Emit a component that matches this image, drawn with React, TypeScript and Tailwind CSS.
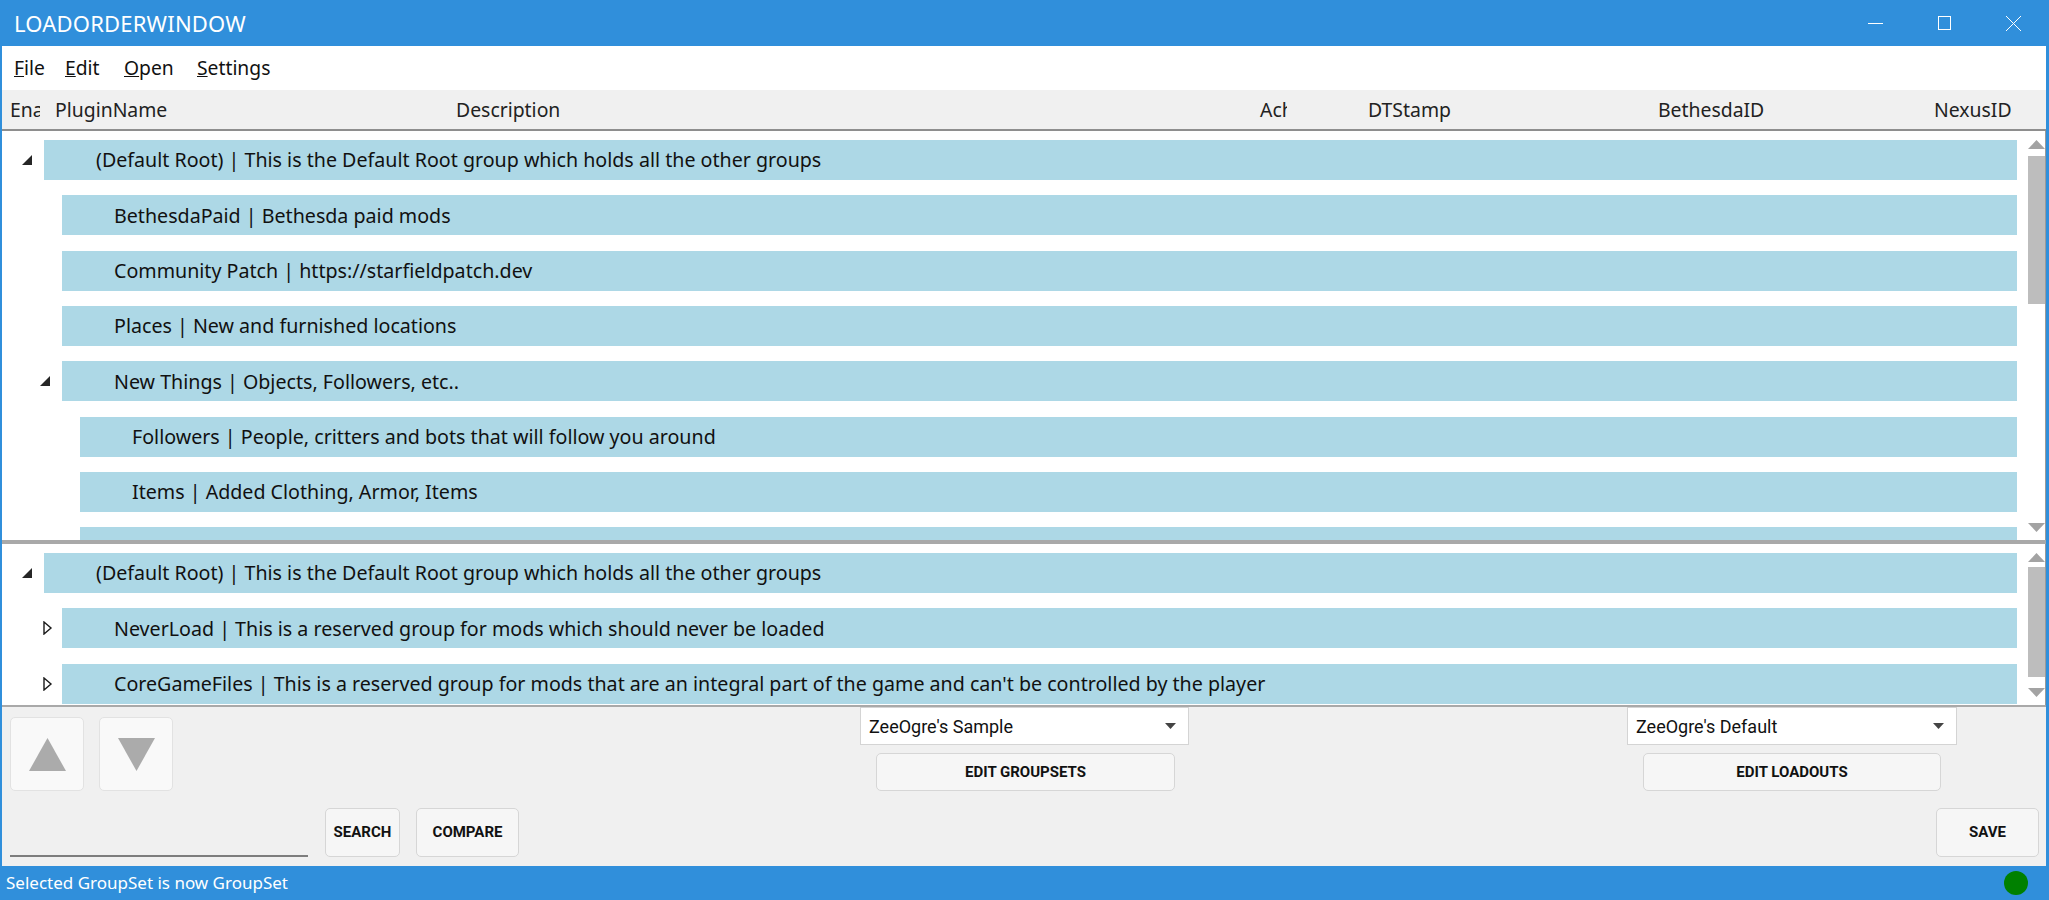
import React from 'react';

type Node = { lvl: number; exp?: 'open' | 'closed'; text: string };

const topTree: Node[] = [
    { lvl: 0, exp: 'open', text: '(Default Root) | This is the Default Root group which holds all the other groups' },
    { lvl: 1, text: 'BethesdaPaid | Bethesda paid mods' },
    { lvl: 1, text: 'Community Patch | https://starfieldpatch.dev' },
    { lvl: 1, text: 'Places | New and furnished locations' },
    { lvl: 1, exp: 'open', text: 'New Things | Objects, Followers, etc..' },
    { lvl: 2, text: 'Followers | People, critters and bots that will follow you around' },
    { lvl: 2, text: 'Items | Added Clothing, Armor, Items' },
    { lvl: 2, text: 'New Ships | Ships and ship parts' },
];

const bottomTree: Node[] = [
    { lvl: 0, exp: 'open', text: '(Default Root) | This is the Default Root group which holds all the other groups' },
    { lvl: 1, exp: 'closed', text: 'NeverLoad | This is a reserved group for mods which should never be loaded' },
    { lvl: 1, exp: 'closed', text: "CoreGameFiles | This is a reserved group for mods that are an integral part of the game and can't be controlled by the player" },
];

const indent = ['pl-[16px]', 'pl-[34px]', 'pl-[52px]'];

const Expander = ({ exp }: { exp?: 'open' | 'closed' }) => (
    <div className="w-[18px] h-[40px] flex items-center justify-center">
        {exp === 'open' && (
            <svg width="12" height="12" viewBox="0 0 12 12">
                <polygon points="11,1 11,11 1,11" fill="#262626" />
            </svg>
        )}
        {exp === 'closed' && (
            <svg width="12" height="14" viewBox="0 0 12 14" className="ml-[5px]">
                <polygon points="2,1 9,7 2,13" fill="#fff" stroke="#1a1a1a" strokeWidth="1.4" />
            </svg>
        )}
    </div>
);

const TreeRow = ({ node }: { node: Node }) => (
    <div className={`flex items-center h-[40px] mb-[15.33px] shrink-0 ${indent[node.lvl]}`}>
        <Expander exp={node.exp} />
        <div className="ml-[8px] flex-1 h-[40px] bg-[#add8e6] flex items-center pl-[52px] text-[19.65px] text-[#111] whitespace-nowrap overflow-hidden">
            {node.text}
        </div>
    </div>
);

const ScrollBar = ({ thumbTop, thumbH }: { thumbTop: number; thumbH: number }) => (
    <div className="w-[22px] h-full flex flex-col items-center pl-[5px]">
        <svg width="17" height="10" viewBox="0 0 17 10" className="mt-[9px] shrink-0">
            <polygon points="8.5,0 17,9 0,9" fill="#a3a3a3" />
        </svg>
        <div className="w-[17px] bg-[#bdbdbd] shrink-0" style={{ marginTop: thumbTop, height: thumbH }} />
        <div className="flex-1" />
        <svg width="17" height="10" viewBox="0 0 17 10" className="mb-[7px] shrink-0">
            <polygon points="0,0 17,0 8.5,9" fill="#a3a3a3" />
        </svg>
    </div>
);

const TreePane = ({ nodes, h, thumbTop, thumbH, pt }: { nodes: Node[]; h: string; thumbTop: number; thumbH: number; pt: string }) => (
    <div className={`flex bg-white ${h} border-r border-[#9a9a9a]`}>
        <div className={`flex-1 flex flex-col overflow-hidden pr-[6px] ${pt}`}>
            {nodes.map((n, i) => <TreeRow key={i} node={n} />)}
        </div>
        <ScrollBar thumbTop={thumbTop} thumbH={thumbH} />
    </div>
);

const Btn = ({ label, className }: { label: string; className: string }) => (
    <div className={`flex items-center justify-center bg-[#f6f6f6] border border-[#d6d6d6] rounded-[5px] font-['Roboto',sans-serif] font-bold text-[15px] text-[#111] ${className}`}>
        {label}
    </div>
);

const Combo = ({ label, className }: { label: string; className: string }) => (
    <div className={`flex items-center justify-between bg-white border border-[#d4d4d4] h-[38px] pl-[8px] pr-[12px] font-['Roboto',sans-serif] text-[18px] text-[#111] ${className}`}>
        <span>{label}</span>
        <svg width="11" height="6" viewBox="0 0 11 6">
            <polygon points="0,0 11,0 5.5,6" fill="#444" />
        </svg>
    </div>
);

export default function App() {
    return (
        <div className="w-[2049px] h-[900px] flex flex-col bg-[#f0f0f0] font-['Noto_Sans','Open_Sans',sans-serif] overflow-hidden">
            {/* TITLE BAR */}
            <div className="h-[46px] shrink-0 bg-[#308fdb] flex items-center pl-[14px] text-white">
                <span className="text-[22px] tracking-[0.2px]">LOADORDERWINDOW</span>
                <div className="flex-1" />
                <div className="w-[15px] h-px bg-white mr-[55px]" />
                <div className="w-[13px] h-[14px] border border-white mr-[54px]" />
                <svg width="17" height="17" viewBox="0 0 17 17" className="mr-[27px]">
                    <path d="M1 1 L16 16 M16 1 L1 16" stroke="#fff" strokeWidth="1" />
                </svg>
            </div>

            <div className="flex-1 flex flex-col border-l-2 border-r-[3px] border-[#308fdb]">
                {/* MENU */}
                <div className="h-[44px] shrink-0 bg-white flex items-center pl-[12px] text-[19.3px] text-[#111]">
                    <span className="w-[51px]"><u>F</u>ile</span>
                    <span className="w-[59px]"><u>E</u>dit</span>
                    <span className="w-[73px]"><u>O</u>pen</span>
                    <span><u>S</u>ettings</span>
                </div>

                {/* COLUMN HEADERS */}
                <div className="h-[41px] shrink-0 bg-[#f0f0f0] border-b-2 border-[#8e8e8e] flex items-center text-[19.4px] text-[#222] whitespace-nowrap">
                    <div className="w-[38px] pl-[8px] overflow-hidden">Ena</div>
                    <div className="w-[408px] pl-[15px]">PluginName</div>
                    <div className="w-[804px] pl-[8px]">Description</div>
                    <div className="w-[35px] pl-[8px] overflow-hidden">Ach</div>
                    <div className="w-[371px] pl-[81px]">DTStamp</div>
                    <div className="w-[276px]">BethesdaID</div>
                    <div>NexusID</div>
                </div>

                {/* TREES */}
                <TreePane nodes={topTree} h="h-[409px]" pt="pt-[9px]" thumbTop={6} thumbH={148} />
                <div className="h-[4px] shrink-0 bg-[#a9a9a9]" />
                <TreePane nodes={bottomTree} h="h-[161px]" pt="pt-[9px]" thumbTop={4} thumbH={110} />
                <div className="h-[2px] shrink-0 bg-[#a9a9a9]" />

                {/* CONTROLS */}
                <div className="flex-1 flex items-start">
                    <div className="flex flex-col pl-[8px] pt-[10px]">
                        <div className="flex gap-[15px]">
                            <div className="w-[74px] h-[74px] bg-[#f9f9f9] border border-[#e2e2e2] rounded-[5px] flex items-center justify-center">
                                <svg width="37" height="33" viewBox="0 0 37 33"><polygon points="18.5,0 37,33 0,33" fill="#ababab" /></svg>
                            </div>
                            <div className="w-[74px] h-[74px] bg-[#f9f9f9] border border-[#e2e2e2] rounded-[5px] flex items-center justify-center">
                                <svg width="37" height="33" viewBox="0 0 37 33"><polygon points="0,0 37,0 18.5,33" fill="#ababab" /></svg>
                            </div>
                        </div>
                        <div className="flex mt-[17px]">
                            <div className="w-[298px] h-[49px] border-b-2 border-[#7d7d7d]" />
                            <Btn label="SEARCH" className="ml-[17px] w-[75px] h-[49px]" />
                            <Btn label="COMPARE" className="ml-[16px] w-[103px] h-[49px]" />
                        </div>
                    </div>

                    <div className="flex flex-col ml-[341px]">
                        <Combo label="ZeeOgre's Sample" className="w-[329px]" />
                        <Btn label="EDIT GROUPSETS" className="ml-[16px] mt-[8px] w-[299px] h-[38px]" />
                    </div>

                    <div className="flex flex-col ml-[438px] w-[412px]">
                        <Combo label="ZeeOgre's Default" className="w-[330px]" />
                        <Btn label="EDIT LOADOUTS" className="ml-[16px] mt-[8px] w-[298px] h-[38px]" />
                        <Btn label="SAVE" className="self-end mt-[17px] w-[103px] h-[49px]" />
                    </div>
                </div>
            </div>

            {/* STATUS BAR */}
            <div className="h-[34px] shrink-0 bg-[#308fdb] flex items-center pl-[6px] pr-[21px] text-white text-[17px]">
                <span>Selected GroupSet is now GroupSet</span>
                <div className="flex-1" />
                <div className="w-[24px] h-[24px] rounded-full bg-[#008000]" />
            </div>
        </div>
    );
}
